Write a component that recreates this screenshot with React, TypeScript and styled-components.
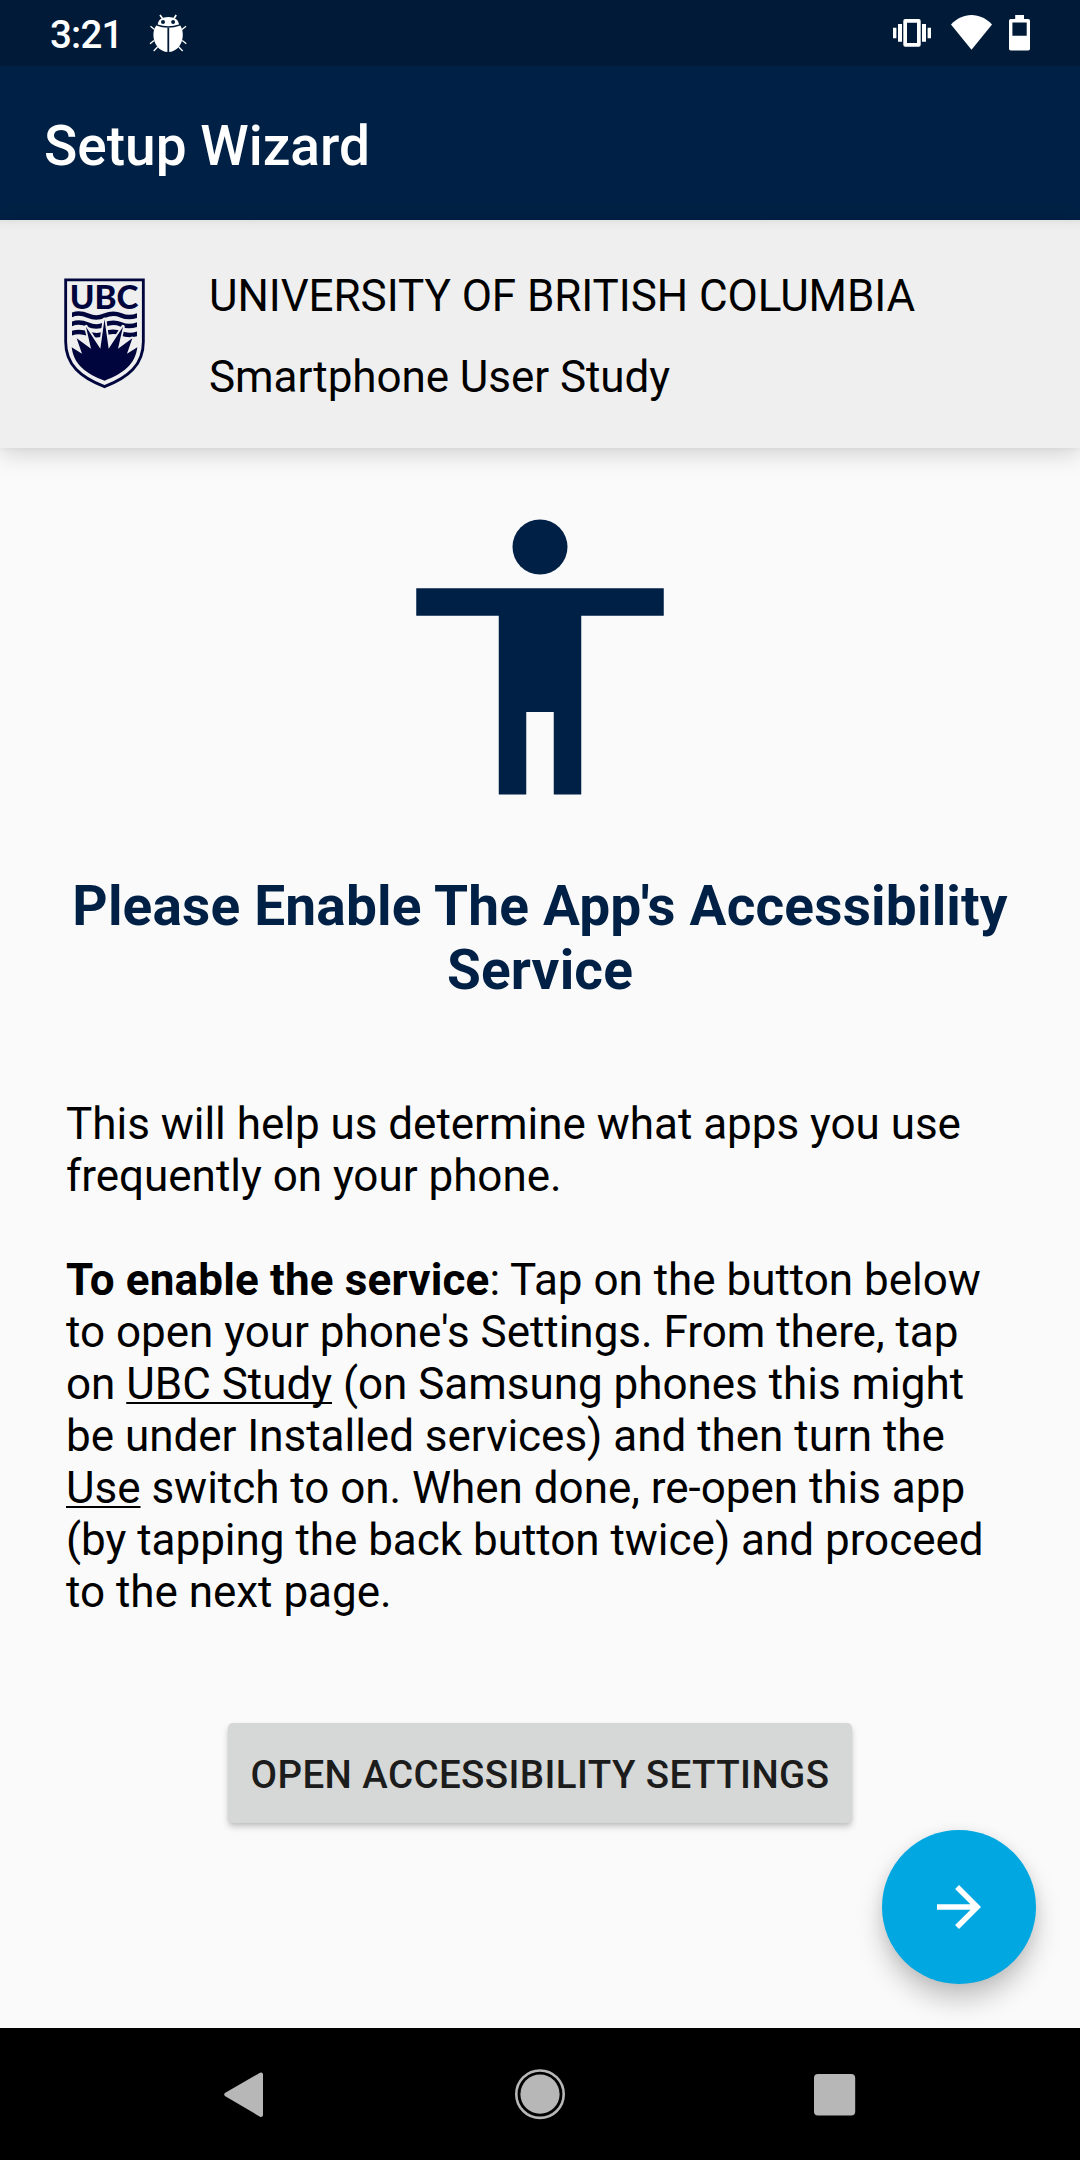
import React from "react";
import styled, { createGlobalStyle } from "styled-components";

const GlobalStyle = createGlobalStyle`
  html, body { margin: 0; padding: 0; }
  body {
    background: #fafafa;
    font-family: Roboto, "Noto Sans", sans-serif;
  }
  *, *::before, *::after { box-sizing: border-box; }
  svg { display: block; flex: none; }
`;

const Screen = styled.div`
  position: relative;
  display: flex;
  flex-direction: column;
  width: 1080px;
  height: 2160px;
  background: #fafafa;
  color: #000;
  overflow: hidden;
`;

const StatusBar = styled.header`
  display: flex;
  align-items: center;
  height: 66px;
  flex: none;
  padding: 0 50px;
  background: #001a37;
  color: #fff;
`;

const Clock = styled.span`
  width: 98px;
  padding-top: 4px;
  font-weight: 500;
  font-size: 38.5px;
  letter-spacing: -0.8px;
  line-height: 46px;
`;

const StatusIcons = styled.div`
  display: flex;
  align-items: center;
  gap: 18px;
  margin-left: auto;
`;

const AppBar = styled.div`
  display: flex;
  align-items: center;
  height: 154px;
  flex: none;
  padding: 6px 44px 0;
  background: #002145;
`;

const AppTitle = styled.h1`
  margin: 0;
  color: #fff;
  font-size: 55px;
  font-weight: 500;
  line-height: 64px;
`;

const Banner = styled.section`
  display: flex;
  align-items: flex-start;
  height: 228px;
  flex: none;
  padding: 50px 0 0 64px;
  background: linear-gradient(#e2e2e2 0, #ebebeb 5px, #efefef 12px);
  box-shadow: 0 6px 22px rgba(0, 0, 0, 0.16), 0 1px 5px rgba(0, 0, 0, 0.04);
`;

const CrestSlot = styled.div`
  padding-top: 8px;
`;

const BannerText = styled.div`
  display: flex;
  flex-direction: column;
  gap: 29px;
  margin-left: 64px;
  font-size: 44px;
  letter-spacing: -0.07px;
  line-height: 52px;
`;

const Content = styled.main`
  display: flex;
  flex-direction: column;
  align-items: center;
  flex: 1;
  padding: 44px 66px 0;
`;

const Heading = styled.h2`
  margin: 52px 0 0;
  color: #002145;
  font-size: 55px;
  font-weight: 700;
  letter-spacing: 0.17px;
  line-height: 64px;
  text-align: center;
`;

const Instructions = styled.div`
  display: flex;
  flex-direction: column;
  gap: 52px;
  width: 100%;
  margin-top: 96px;
  font-size: 44px;
  line-height: 52px;
`;

const Paragraph = styled.p`
  margin: 0;
  letter-spacing: -0.02px;
`;

const Strong = styled.b`
  letter-spacing: 0.16px;
`;

const Term = styled.span`
  text-decoration: underline;
  text-decoration-thickness: 2px;
  text-underline-offset: 3px;
  text-decoration-skip-ink: none;
`;

const SettingsButton = styled.button`
  width: 624px;
  height: 100px;
  margin-top: 105px;
  padding: 4px 0 0;
  border: 0;
  border-radius: 5px;
  background: #d6d7d7;
  box-shadow: 0 4px 6px rgba(0, 0, 0, 0.2), 0 1px 3px rgba(0, 0, 0, 0.06);
  color: #1c1c1c;
  font-family: inherit;
  font-size: 38.5px;
  font-weight: 500;
  letter-spacing: 0.4px;
  line-height: 46px;
  white-space: nowrap;
`;

const NextButton = styled.button`
  position: absolute;
  right: 44px;
  bottom: 176px;
  display: flex;
  align-items: center;
  justify-content: center;
  width: 154px;
  height: 154px;
  padding: 0;
  border: 0;
  border-radius: 50%;
  background: #00a7e1;
  box-shadow: 0 16px 26px rgba(0, 0, 0, 0.21), 0 2px 14px rgba(0, 0, 0, 0.07);
`;

const NavBar = styled.nav`
  display: flex;
  align-items: center;
  justify-content: space-between;
  height: 132px;
  flex: none;
  padding: 0 222px;
  background: #000;
`;

const BugIcon = () => (
  <svg width="40" height="40" viewBox="148 13 40 40" fill="#fff">
    <path d="M157.700 24.600C158 19.800 162 17 168.200 17S178.700 19.800 179 24.600Q168.200 27.700 157.700 24.600Z" />
    <path d="M156.200 25.400Q168.200 30 180.300 25.400C182.200 28.300 182.800 31.500 182.800 35C182.800 44 177 52 168.200 52S153.400 44 153.400 35C153.400 31.500 154.200 28.300 156.200 25.400Z" />
    <path d="M168.300 27.800V52" stroke="#001a37" strokeWidth="1.800" />
    <circle cx="163" cy="22" r="2" fill="#001a37" />
    <circle cx="173.100" cy="22" r="2" fill="#001a37" />
    <path d="M162.500 18.500L160 15M174 18.500L176.200 15" fill="none" stroke="#fff" strokeWidth="1.700" />
    <path d="M154.500 29.500L150.500 26.300M182 29.500L186 26.300M154 40.500L150 43.800M182.300 40.500L186.300 43.800M157.500 47L153.700 51M178.800 47L182.700 51" fill="none" stroke="#fff" strokeWidth="1.300" />
  </svg>
);

const VibrateIcon = () => (
  <svg width="40" height="38" viewBox="893 14 40 38" fill="#fff">
    <path fillRule="evenodd" d="M905.300 19h13.400a2 2 0 0 1 2 2v23.700a2 2 0 0 1-2 2h-13.400a2 2 0 0 1-2-2V21a2 2 0 0 1 2-2ZM907 22.700V43h10V22.700Z" />
    <path d="M898 24h4v17.700h-4ZM893 27.700h3.400v10.600H893ZM922 24h4v17.700h-4ZM927.600 27.700h3.400v10.600h-3.400Z" />
  </svg>
);

const WifiIcon = () => (
  <svg width="40" height="38" viewBox="951 14 40 38" fill="#fff" overflow="visible">
    <path d="M951 24.500C956.800 18.500 963.800 15.100 971.500 15.100S986.200 18.500 992 24.500L971.500 49.700Z" />
  </svg>
);

const BatteryIcon = () => (
  <svg width="21" height="38" viewBox="1009 14 21 38" fill="#fff">
    <path fillRule="evenodd" d="M1015.200 15h8.800v4h4.200a1.800 1.800 0 0 1 1.800 1.800v28a1.800 1.800 0 0 1-1.800 1.800h-17.400a1.800 1.800 0 0 1-1.800-1.800v-28a1.800 1.800 0 0 1 1.800-1.800h4.400ZM1012.400 22.500v13.200h14.300V22.500Z" />
  </svg>
);

/* Shield with lettering, three waves and a rising sun */
const UbcCrest = () => (
  <svg width="81" height="111" viewBox="72 54 243 333">
    <clipPath id="wave-band">
      <rect x="96" y="150" width="195" height="90" />
    </clipPath>
    <path
      d="M77 59.500H310V245C310 314 266 352 193.500 380C121 352 77 314 77 245Z"
      fill="none"
      stroke="#00063d"
      strokeWidth="8.500"
    />
    <text
      x="89"
      y="146"
      fill="#00063d"
      fontFamily="Lato, sans-serif"
      fontWeight="900"
      fontSize="97"
      textLength="206"
      lengthAdjust="spacingAndGlyphs"
    >
      UBC
    </text>
    <g fill="none" stroke="#00063d" strokeWidth="13.500" clipPath="url(#wave-band)">
      <path d="M92 166C110 158 128 160 144 167S177 174 193.500 167S227 159 243 166S277 173 296 165" />
      <path d="M92 193C110 185 128 187 144 194S177 201 193.500 194S227 186 243 193S277 200 296 192" />
      <path d="M92 221C110 213 128 215 144 221S177 228 193.500 221S227 214 243 220S277 227 296 220" />
    </g>
    <path
      d="M95 262L126 281L110 235L153 266L138 200L181 266L193.500 178L206 266L249 200L234 266L277 235L261 281L292 262C286 313 249 342 193.500 362C138 342 101 313 95 262Z"
      fill="#00063d"
      stroke="#efefef"
      strokeWidth="11"
      strokeLinejoin="round"
      paintOrder="stroke"
    />
  </svg>
);

const PersonIcon = () => (
  <svg width="330" height="330" viewBox="0 0 24 24" fill="#002145">
    <circle cx="12" cy="4" r="2" />
    <path d="M21 9h-6v13h-2v-6h-2v6H9V9H3V7h18v2z" />
  </svg>
);

const ArrowIcon = () => (
  <svg width="66" height="66" viewBox="0 0 24 24" fill="#fff">
    <path d="M12 4l-1.410 1.410L16.170 11H4v2h12.170l-5.580 5.590L12 20l8-8z" />
  </svg>
);

const BackIcon = () => (
  <svg width="43" height="52" viewBox="222 2068 43 52">
    <path d="M226.300 2094.500L261 2074.500V2115Z" fill="#b7b7b7" stroke="#b7b7b7" strokeWidth="4" strokeLinejoin="round" />
  </svg>
);

const HomeIcon = () => (
  <svg width="52" height="52" viewBox="0 0 52 52">
    <circle cx="26" cy="26.200" r="23.700" fill="none" stroke="#b7b7b7" strokeWidth="2.600" />
    <circle cx="26" cy="26.200" r="19.600" fill="#b7b7b7" />
  </svg>
);

const RecentsIcon = () => (
  <svg width="43" height="52" viewBox="0 0 43 52" overflow="visible">
    <rect x="-1" y="6" width="41.200" height="41.500" rx="4" fill="#b7b7b7" />
  </svg>
);

export default function App() {
  return (
    <>
      <GlobalStyle />
      <Screen>
        <StatusBar>
          <Clock>3:21</Clock>
          <BugIcon />
          <StatusIcons>
            <VibrateIcon />
            <WifiIcon />
            <BatteryIcon />
          </StatusIcons>
        </StatusBar>
        <AppBar>
          <AppTitle>Setup Wizard</AppTitle>
        </AppBar>
        <Banner>
          <CrestSlot>
            <UbcCrest />
          </CrestSlot>
          <BannerText>
            <span>UNIVERSITY OF BRITISH COLUMBIA</span>
            <span>Smartphone User Study</span>
          </BannerText>
        </Banner>
        <Content>
          <PersonIcon />
          <Heading>Please Enable The App's Accessibility Service</Heading>
          <Instructions>
            <Paragraph>
              This will help us determine what apps you use frequently on your phone.
            </Paragraph>
            <Paragraph>
              <Strong>To enable the service</Strong>: Tap on the button below to open your
              phone's Settings. From there, tap on <Term>UBC Study</Term> (on Samsung phones
              this might be under Installed services) and then turn the <Term>Use</Term>{" "}
              switch to on. When done, re-open this app (by tapping the back button twice)
              and proceed to the next page.
            </Paragraph>
          </Instructions>
          <SettingsButton>OPEN ACCESSIBILITY SETTINGS</SettingsButton>
        </Content>
        <NavBar>
          <BackIcon />
          <HomeIcon />
          <RecentsIcon />
        </NavBar>
        <NextButton aria-label="Next">
          <ArrowIcon />
        </NextButton>
      </Screen>
    </>
  );
}
